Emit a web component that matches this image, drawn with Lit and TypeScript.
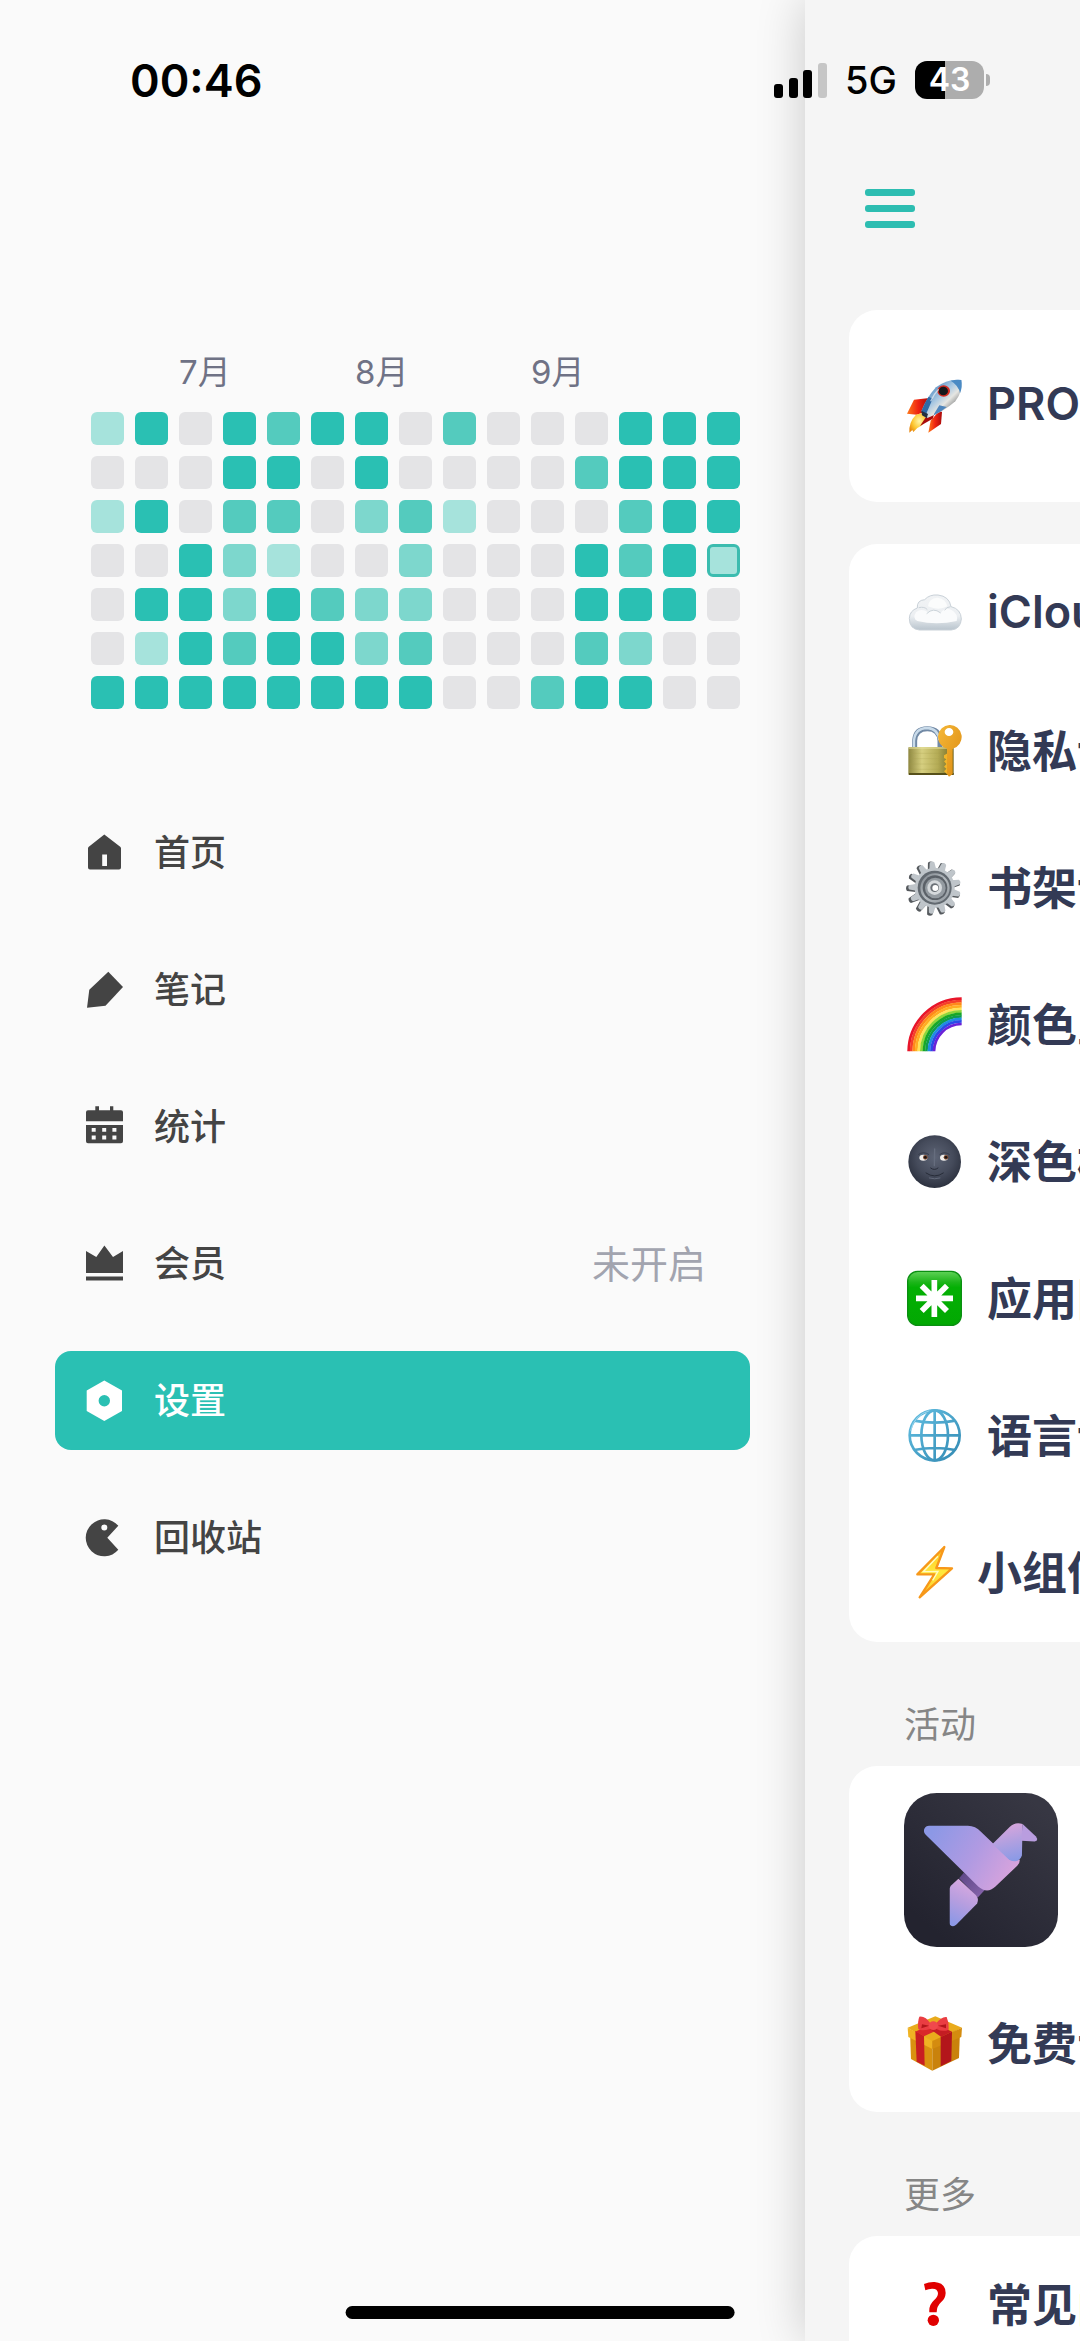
import { LitElement, html, css, svg, nothing } from "lit";
import { customElement } from "lit/decorators.js";
import { classMap } from "lit/directives/class-map.js";

/* ---------- drawer icons, 44 x 44 ---------- */

const homeIcon = svg`<path fill-rule="evenodd" d="M22.3 3.4 L38.2 15.8 Q39 16.5 39 17.5 V36.4 Q39 38.4 37 38.4 H8 Q6 38.4 6 36.4 V17.5 Q6 16.5 6.8 15.8 Z M20.2 23.4 V35.1 H25 V23.4 Z"/>`;
const penIcon = svg`<path d="M26.3 3.7 L41 19 L23.5 37.8 L5 39.7 L7.3 21.7 Z"/>`;
const calendarIcon = svg`<path fill-rule="evenodd" d="M13.3 1.3 H17 V5.3 H28 V1.3 H31.3 V5.3 H39 Q41 5.3 41 7.3 V16.3 H4 V7.3 Q4 5.3 6 5.3 H13.3 Z M4 20 H41 V36.3 Q41 38.3 39 38.3 H6 Q4 38.3 4 36.3 Z M9.7 23 V26.8 H13.7 V23 Z M20.2 23 V26.8 H24.2 V23 Z M30.4 23 V26.8 H34.4 V23 Z M9.7 30.6 V34.4 H13.7 V30.6 Z M20.2 30.6 V34.4 H24.2 V30.6 Z M30.4 30.6 V34.4 H34.4 V30.6 Z"/>`;
const crownIcon = svg`<path d="M4 8.9 L14.3 14.9 L22.4 3.6 L31 14.9 L41 8.9 V30.9 H4 Z M4 34.6 H41 V38.6 H4 Z"/>`;
const nutIcon = svg`<path fill-rule="evenodd" d="M22.3 1.5 L40 11.6 V32 L22.3 42 L4.7 32 V11.6 Z M22.3 16 A5.7 5.7 0 1 0 22.3 27.4 A5.7 5.7 0 1 0 22.3 16 Z"/>`;
const binIcon = svg`<path fill-rule="evenodd" d="M36.3 9.8 A18.5 18.5 0 1 0 36.3 33.8 L25.3 21.8 Z M22.3 8.4 A3 3 0 1 1 22.3 14.4 A3 3 0 1 1 22.3 8.4 Z"/>`;

/* ---------- settings icons, a 183-unit square shown at 61px ---------- */

const rocketIcon = svg`
  <svg viewBox="372 255 183 183">
    <defs>
      <linearGradient id="rk-body" x1="0" y1="0" x2="1" y2="1">
        <stop offset="0.15" stop-color="#3f7fba"/><stop offset="0.45" stop-color="#a9c8e2"/>
        <stop offset="0.6" stop-color="#e6e6e2"/><stop offset="0.85" stop-color="#55585c"/>
      </linearGradient>
      <linearGradient id="rk-fin" x1="0" y1="0" x2="1" y2="0">
        <stop offset="0" stop-color="#ff7a1a"/><stop offset="0.5" stop-color="#ef2312"/><stop offset="1" stop-color="#a80b0b"/>
      </linearGradient>
      <radialGradient id="rk-flame" cx="0.6" cy="0.4" r="0.7">
        <stop offset="0" stop-color="#fff6a8"/><stop offset="0.6" stop-color="#fcc62f"/><stop offset="1" stop-color="#e8860e"/>
      </radialGradient>
    </defs>
    <path fill="url(#rk-fin)" d="M381 371 L402 329 L448 324 L434 366 L410 374 Z"/>
    <path fill="url(#rk-fin)" d="M445 428 L452 392 L478 362 L486 366 L483 402 Z"/>
    <path fill="url(#rk-flame)" d="M388 428 Q386 396 408 374 L424 370 L438 384 Q436 404 412 414 L400 426 L397 420 Z"/>
    <path fill="#a80b0b" d="M420 408 L440 378 L470 352 L458 386 Z"/>
    <path fill="url(#rk-body)" d="M424 364 Q440 322 468 292 Q504 264 544 270 Q550 302 526 334 Q490 366 442 384 Z"/>
    <path fill="#2f6aa6" d="M424 364 Q434 338 446 320 L458 326 L440 368 L442 384 Z"/>
    <path fill="#4f86bd" d="M462 372 L478 346 L500 351 Q484 365 462 376 Z"/>
    <path fill="#4a8ac4" d="M512 272 Q530 268 544 270 Q548 290 540 310 Q536 286 512 272 Z"/>
    <path fill="#25303f" d="M424 362 L444 372 L440 384 L426 376 Z"/>
    <ellipse cx="491" cy="303" rx="19" ry="17" fill="#d22a20"/>
    <ellipse cx="490" cy="303" rx="14" ry="13" fill="#15181c"/>
    <path stroke="#e9eef2" stroke-width="4" fill="none" opacity="0.7" d="M452 334 Q462 312 476 298"/>
  </svg>`;

const cloudIcon = svg`
  <svg viewBox="372 874 183 183">
    <defs>
      <linearGradient id="cl" x1="0" y1="0" x2="0" y2="1">
        <stop offset="0" stop-color="#f1f3f5"/><stop offset="0.6" stop-color="#eceff2"/><stop offset="1" stop-color="#b9c4cd"/>
      </linearGradient>
    </defs>
    <path fill="url(#cl)" stroke="#c9d1d8" stroke-width="3" d="M418 1015 Q388 1012 388 980 Q389 957 412 949 Q410 926 434 924 Q448 908 474 910 Q508 914 513 945 Q543 952 544 982 Q542 1012 514 1015 Z"/>
    <path fill="#fafbfc" d="M412 988 Q396 980 408 962 Q424 948 444 962 Q462 948 482 964 Q498 944 516 956 Q536 968 530 988 Q470 1002 412 988 Z"/>
    <path fill="#fbfcfc" d="M444 944 Q446 920 472 918 Q498 922 502 944 Q476 958 444 944 Z"/>
    <path fill="none" stroke="#ccd4da" stroke-width="3" d="M440 966 Q460 946 482 964 M416 948 Q434 944 442 954 M512 945 Q498 946 494 956"/>
  </svg>`;

const lockIcon = svg`
  <svg viewBox="372 86 183 183">
    <defs>
      <linearGradient id="lk-body" x1="0" y1="0" x2="1" y2="0">
        <stop offset="0" stop-color="#8e8740"/><stop offset="0.3" stop-color="#d6cf80"/><stop offset="0.65" stop-color="#b4ab55"/><stop offset="1" stop-color="#6d6522"/>
      </linearGradient>
      <linearGradient id="lk-key" x1="0" y1="0" x2="1" y2="1">
        <stop offset="0" stop-color="#f5b838"/><stop offset="1" stop-color="#dc8a10"/>
      </linearGradient>
    </defs>
    <path fill="none" stroke="#7189a5" stroke-width="15" d="M404 170 V148 Q406 112 442 112 Q478 112 480 148 V170"/>
    <path fill="none" stroke="#c9dbea" stroke-width="7" d="M402 170 V148 Q405 111 442 110 Q474 112 478 146"/>
    <rect x="385" y="167" width="136" height="84" rx="3" fill="url(#lk-body)"/>
    <path stroke="#e9e4a4" stroke-width="3" d="M386 170 H520"/>
    <path stroke="#a59d4c" stroke-width="2" opacity="0.35" d="M388 186 H490 M388 202 H490 M388 218 H490 M388 234 H490"/>
    <rect x="387" y="245" width="134" height="6" fill="#57501a"/>
    <path fill="#5f5413" d="M510 180 h8 v66 l-8 6z"/>
    <path fill="#f0b429" d="M503 186 L492 192 L492 200 L499 204 L492 210 L499 218 L492 226 L499 232 L492 240 L503 250 Z"/>
    <path fill="url(#lk-key)" fill-rule="evenodd" d="M508 101 A35 36 0 0 1 518 172 V248 L507 256 L501 248 V172 A35 36 0 0 1 508 101 Z M507 110 A13 12 0 1 0 507 134 A13 12 0 1 0 507 110 Z"/>
  </svg>`;

const teeth = Array.from({ length: 13 }, (_, i) => (i * 360) / 13 - 6);
const gearIcon = svg`
  <svg viewBox="372 498 183 183">
    <defs>
      <linearGradient id="gr" x1="0" y1="0" x2="1" y2="1">
        <stop offset="0" stop-color="#7d848b"/><stop offset="0.5" stop-color="#b4babf"/><stop offset="1" stop-color="#90979d"/>
      </linearGradient>
    </defs>
    <g fill="#55595d">${teeth.map((a) => svg`<path transform="rotate(${a} 460 593)" d="M449 540 L452 514 Q460 508 468 514 L471 540 Z"/>`)}</g>
    <g fill="#bfc5ca">${teeth.map((a) => svg`<path transform="rotate(${a} 464 590)" d="M453 540 L457 514 Q464 508 471 514 L475 540 Z"/>`)}</g>
    <circle cx="464" cy="590" r="60" fill="#bfc5ca"/>
    <circle cx="464" cy="590" r="51" fill="#626970"/>
    <circle cx="465" cy="591" r="44" fill="url(#gr)"/>
    <circle cx="465" cy="590" r="37" fill="#5b6168"/>
    <circle cx="466" cy="591" r="31" fill="#949ba1"/>
    <circle cx="464" cy="590" r="22" fill="#d5d9dc"/>
    <circle cx="464" cy="590" r="13" fill="#6b7177"/>
    <circle cx="466" cy="591" r="9" fill="#ffffff"/>
  </svg>`;

const bands = ["#e8152a", "#f4402a", "#ff8a1a", "#ffae22", "#ffe45a", "#8fd63a", "#18a826", "#0f9c4c", "#1e8fe0", "#2a4ae8", "#6a22d8"];
const rainbowIcon = svg`
  <svg viewBox="372 910 183 183">
    ${bands.map((c, i) => {
      const r = 159 - i * 7.6;
      return svg`<path fill="none" stroke="${c}" stroke-width="8.2" d="M${545 - r} 1082 A${r} ${r} 0 0 1 545 ${1083 - r}"/>`;
    })}
  </svg>`;

const moonIcon = svg`
  <svg viewBox="372 152 183 183">
    <defs>
      <radialGradient id="mn" cx="0.5" cy="0.42" r="0.58">
        <stop offset="0" stop-color="#5d6475"/><stop offset="0.6" stop-color="#454b5b"/><stop offset="1" stop-color="#2c313f"/>
      </radialGradient>
    </defs>
    <circle cx="464" cy="244" r="79" fill="url(#mn)"/>
    <path fill="none" stroke="#363b4a" stroke-width="3" stroke-linecap="round" d="M416 222 Q430 212 446 222 M480 222 Q494 212 508 222"/>
    <ellipse cx="430" cy="232" rx="12" ry="9" fill="#f1efec"/>
    <ellipse cx="492" cy="232" rx="12" ry="9" fill="#f1efec"/>
    <circle cx="436" cy="231" r="7" fill="#7b4a31"/><circle cx="436" cy="231" r="4" fill="#1a1412"/>
    <circle cx="498" cy="231" r="7" fill="#7b4a31"/><circle cx="498" cy="231" r="4" fill="#1a1412"/>
    <path fill="none" stroke="#666d7e" stroke-width="4" stroke-linecap="round" d="M464 206 L463 256"/>
    <path fill="none" stroke="#272c38" stroke-width="3" stroke-linecap="round" d="M452 263 Q463 272 474 263 M438 278 Q464 296 490 278"/>
    <path fill="none" stroke="#636a7b" stroke-width="3" stroke-linecap="round" d="M448 293 Q464 298 480 293"/>
  </svg>`;

const asteriskIcon = svg`
  <svg viewBox="372 565 183 183">
    <defs>
      <linearGradient id="as" x1="0" y1="0" x2="0" y2="1">
        <stop offset="0" stop-color="#5fd257"/><stop offset="0.2" stop-color="#1db51a"/><stop offset="0.3" stop-color="#04b004"/><stop offset="1" stop-color="#02a802"/>
      </linearGradient>
    </defs>
    <rect x="383" y="575" width="161" height="162" rx="30" fill="url(#as)" stroke="#0b8f12" stroke-width="4"/>
    <path stroke="#ffffff" stroke-width="17" d="M463 601 V712 M408 656 H519 M425 618 L501 694 M501 618 L425 694"/>
  </svg>`;

const globeIcon = svg`
  <svg viewBox="372 977 183 183">
    <defs>
      <linearGradient id="gl" gradientUnits="userSpaceOnUse" x1="388" y1="992" x2="540" y2="1144">
        <stop offset="0" stop-color="#62bfe2"/><stop offset="1" stop-color="#3289b2"/>
      </linearGradient>
    </defs>
    <g fill="none" stroke="url(#gl)" stroke-width="8">
      <circle cx="464" cy="1068" r="75"/>
      <ellipse cx="464" cy="1068" rx="40" ry="75"/>
      <path d="M464 992 V1144 M388 1068 H540 M402 1024 Q464 1036 526 1024 M402 1112 Q464 1100 526 1112"/>
    </g>
    <path fill="none" stroke="#bfe6f4" stroke-width="2" d="M392 1054 Q402 1008 448 994"/>
  </svg>`;

const boltIcon = svg`
  <svg viewBox="372 189 183 183">
    <defs>
      <linearGradient id="bt" x1="0" y1="0" x2="0" y2="1">
        <stop offset="0" stop-color="#ffc11c"/><stop offset="0.5" stop-color="#ffe93e"/><stop offset="1" stop-color="#ffc928"/>
      </linearGradient>
    </defs>
    <path fill="url(#bt)" stroke="#f7981a" stroke-width="7" stroke-linejoin="round" d="M493 204 L412 286 L463 286 L419 355 L516 268 L469 267 Z"/>
    <path fill="none" stroke="#fffbc4" stroke-width="4" d="M474 232 L430 278 L474 277 L458 304"/>
  </svg>`;

const giftIcon = svg`
  <svg viewBox="372 818 183 183">
    <path fill="#d99210" d="M390 872 L457 900 V991 L393 956 Z"/>
    <path fill="#c9820c" d="M457 900 L540 872 L537 953 L457 991 Z"/>
    <path fill="#e9ab1c" d="M383 862 L466 828 L546 862 L457 908 Z"/>
    <path fill="#f0b323" d="M383 862 L457 902 V926 L385 890 Z"/>
    <path fill="#d48c0f" d="M457 902 L546 862 L544 890 L457 926 Z"/>
    <path fill="#c81e22" d="M406 872 L432 887 L434 976 L410 964 Z"/>
    <path fill="#b3161b" d="M516 874 L482 890 L482 978 L514 962 Z"/>
    <path fill="#d9272a" d="M406 874 L440 858 L466 872 L432 888 Z"/>
    <path fill="#c41d22" d="M450 866 L482 858 L516 874 L484 890 Z"/>
    <path fill="#ea3d42" d="M452 850 Q436 826 418 829 Q412 844 415 866 Q424 874 450 866 Z"/>
    <path fill="#ea3d42" d="M468 850 Q484 828 500 830 Q508 848 506 868 Q488 876 470 866 Z"/>
    <path fill="#b3161b" d="M426 852 L448 856 L424 864 Z M498 852 L474 856 L498 864 Z"/>
    <ellipse cx="460" cy="856" rx="14" ry="13" fill="#f0484c"/>
  </svg>`;

const questionIcon = svg`
  <svg viewBox="372 523 183 183">
    <path fill="#e00000" d="M432 553 Q448 546 464 547 Q497 550 497 580 Q496 598 483 608 Q470 620 470 638 H448 Q446 616 462 602 Q474 592 474 580 Q472 566 456 567 Q446 567 436 572 Z"/>
    <circle cx="460" cy="662" r="17" fill="#e00000"/>
  </svg>`;

const birdLogo = svg`
  <svg class="logo" viewBox="373 159 461 461" role="img" aria-label="app">
    <defs>
      <linearGradient id="bd-bg" x1="0.2" y1="0.9" x2="0.9" y2="0.1">
        <stop offset="0" stop-color="#23232f"/><stop offset="1" stop-color="#373743"/>
      </linearGradient>
      <linearGradient id="bd-wing" x1="0" y1="0.3" x2="1" y2="0.7">
        <stop offset="0" stop-color="#8c98e6"/><stop offset="0.5" stop-color="#b09ae2"/><stop offset="1" stop-color="#dca4dc"/>
      </linearGradient>
      <linearGradient id="bd-neck" x1="0.4" y1="0" x2="0.6" y2="1">
        <stop offset="0" stop-color="#dba6dc"/><stop offset="0.5" stop-color="#b2a0e0"/><stop offset="1" stop-color="#8a9ae6"/>
      </linearGradient>
      <linearGradient id="bd-tail" x1="0.6" y1="0" x2="0.3" y2="1">
        <stop offset="0" stop-color="#dcaae0"/><stop offset="0.5" stop-color="#b79edf"/><stop offset="1" stop-color="#8c98e6"/>
      </linearGradient>
      <linearGradient id="bd-fold" x1="0" y1="0" x2="1" y2="1">
        <stop offset="0" stop-color="#5b4684"/><stop offset="1" stop-color="#8a66ae"/>
      </linearGradient>
    </defs>
    <rect x="373" y="159" width="461" height="461" rx="98" fill="url(#bd-bg)"/>
    <path fill="url(#bd-fold)" d="M538 414 L552 398 L616 448 L594 472 Z"/>
    <path fill="url(#bd-tail)" d="M536 416 L588 464 Q598 474 592 490 L530 553 Q520 562 511 554 Q510 552 510 546 V446 Q510 440 514 436 Z"/>
    <path fill="url(#bd-wing)" d="M448 257 H562 Q586 256 604 276 L690 358 Q704 364 720 358 Q720 368 712 377 L646 440 Q622 462 596 440 L438 284 Q430 276 434 266 Q438 257 448 257 Z"/>
    <path fill="url(#bd-neck)" d="M638 312 L690 260 Q706 245 728 252 L726 346 Q720 362 706 363 Q694 364 686 357 Z"/>
    <path fill="#b99ddf" d="M728 252 L768 289 Q774 296 770 302 L764 304 L724 302 Z"/>
  </svg>`;

/* ---------- data ---------- */

const months = [
  { label: "7月", place: "m7" },
  { label: "8月", place: "m8" },
  { label: "9月", place: "m9" },
];

/* One string per weekday, one digit per week; "t" is today. */
const activity = [
  "140434403000444",
  "000440400003444",
  "140330231000344",
  "00421002000434t",
  "044243220004440",
  "014344230003200",
  "444444440034400",
];

const menu = [
  { icon: homeIcon, label: "首页" },
  { icon: penIcon, label: "笔记" },
  { icon: calendarIcon, label: "统计" },
  { icon: crownIcon, label: "会员", note: "未开启" },
  { icon: nutIcon, label: "设置", active: true },
  { icon: binIcon, label: "回收站" },
];

interface Setting {
  icon: unknown;
  label: string;
  tight?: boolean;
}

const general: Setting[] = [
  { icon: cloudIcon, label: "iCloud" },
  { icon: lockIcon, label: "隐私设置" },
  { icon: gearIcon, label: "书架设置" },
  { icon: rainbowIcon, label: "颜色主题" },
  { icon: moonIcon, label: "深色模式" },
  { icon: asteriskIcon, label: "应用图标" },
  { icon: globeIcon, label: "语言设置" },
  { icon: boltIcon, label: "小组件", tight: true },
];

/* ---------- drawer ---------- */

@customElement("side-drawer")
class SideDrawer extends LitElement {
  static styles = css`
    :host {
      display: block;
      padding: 348px 55px 0;
      background: #fafafa;
    }
    .months,
    .heat {
      display: grid;
      grid-template-columns: repeat(15, minmax(0, 1fr));
      gap: 11px;
      padding: 0 10px 0 36px;
    }
    .months { margin-bottom: 16px; }
    .heat { margin-bottom: 94px; }
    .month {
      grid-column-end: span 4;
      grid-row: 1;
      font-size: 33px;
      line-height: 48px;
      color: #6f7285;
    }
    .m7 { grid-column-start: 3; }
    .m8 { grid-column-start: 7; }
    .m9 { grid-column-start: 11; }
    .day {
      aspect-ratio: 1;
      box-sizing: border-box;
      border-radius: 6px;
      background: #e4e4e6;
    }
    .l1, .lt { background: #a6e3dc; }
    .l2 { background: #7dd7cd; }
    .l3 { background: #54cbbe; }
    .l4 { background: #2ac0b3; }
    .lt { border: 3px solid #3bbcaf; }
    .menu {
      display: flex;
      flex-direction: column;
      gap: 38px;
    }
    .item {
      display: flex;
      align-items: center;
      gap: 28px;
      height: 99px;
      box-sizing: border-box;
      padding: 0 44px 0 27px;
      border-radius: 16px;
      font-size: 36px;
      font-weight: 500;
      color: #444444;
      text-decoration: none;
    }
    .active {
      background: #2ac0b3;
      color: #ffffff;
    }
    .glyph {
      width: 44px;
      height: 44px;
      fill: currentColor;
    }
    .label,
    .note {
      padding-bottom: 5px;
    }
    .note {
      margin-left: auto;
      font-size: 38px;
      font-weight: 400;
      color: #a2a4af;
    }
  `;

  render() {
    return html`
      <div class="months">
        ${months.map((m) => html`<span class="month ${m.place}">${m.label}</span>`)}
      </div>
      <div class="heat">
        ${activity.flatMap((week) => [...week].map((level) => html`<i class="day l${level}"></i>`))}
      </div>
      <nav class="menu">
        ${menu.map(
          (m) => html`<a class=${classMap({ item: true, active: !!m.active })} href="#">
            <svg class="glyph" viewBox="0 0 44 44" aria-hidden="true">${m.icon}</svg>
            <span class="label">${m.label}</span>
            ${m.note ? html`<span class="note">${m.note}</span>` : nothing}
          </a>`
        )}
      </nav>
    `;
  }
}

/* ---------- settings page ---------- */

@customElement("settings-page")
class SettingsPage extends LitElement {
  static styles = css`
    :host {
      display: block;
      overflow: hidden;
      background: #f5f5f5;
    }
    .page {
      width: 100vw;
      box-sizing: border-box;
      padding: 180px 44px 0;
    }
    .toggle {
      display: flex;
      flex-direction: column;
      gap: 9px;
      width: 82px;
      padding: 9px 16px;
      margin-bottom: 73px;
      border: 0;
      background: none;
    }
    .bar {
      height: 7px;
      border-radius: 3px;
      background: #2dbdb1;
    }
    .card {
      border-radius: 28px;
      background: #ffffff;
      overflow: hidden;
    }
    .pro {
      padding: 27px 0 28px;
      margin-bottom: 42px;
    }
    .list { padding: 1px 0; }
    .row {
      display: flex;
      align-items: center;
      gap: 22px;
      width: 100%;
      height: 137px;
      padding: 0 55px;
      border: 0;
      background: none;
      font: inherit;
      font-size: 45px;
      font-weight: 600;
      color: #333a55;
      white-space: nowrap;
      text-align: left;
    }
    .tight { gap: 12px; }
    .emoji {
      display: flex;
      width: 61px;
      height: 61px;
    }
    .emoji svg { width: 100%; }
    .label { padding-bottom: 4px; }
    .title {
      margin: 0;
      padding: 56px 55px 14px;
      font-size: 36px;
      font-weight: 400;
      line-height: 54px;
      color: #868686;
    }
    .app {
      display: flex;
      padding: 27px 55px 28px;
    }
    .logo {
      width: 154px;
      height: 154px;
    }
  `;

  private row(s: Setting) {
    return html`<button class=${classMap({ row: true, tight: !!s.tight })}>
      <span class="emoji" aria-hidden="true">${s.icon}</span><span class="label">${s.label}</span>
    </button>`;
  }

  render() {
    return html`
      <div class="page">
        <button class="toggle" aria-label="菜单">
          <span class="bar"></span><span class="bar"></span><span class="bar"></span>
        </button>
        <section class="card pro">${this.row({ icon: rocketIcon, label: "PRO" })}</section>
        <section class="card list">${general.map((s) => this.row(s))}</section>
        <h2 class="title">活动</h2>
        <section class="card">
          <a class="app" href="#">${birdLogo}</a>
          ${this.row({ icon: giftIcon, label: "免费试用" })}
        </section>
        <h2 class="title">更多</h2>
        <section class="card">${this.row({ icon: questionIcon, label: "常见问题" })}</section>
      </div>
    `;
  }
}

/* ---------- status bar ---------- */

@customElement("status-bar")
class StatusBar extends LitElement {
  static styles = css`
    :host {
      display: flex;
      align-items: center;
      justify-content: space-between;
      height: 160px;
      padding: 0 90px 0 130px;
      color: #000000;
    }
    .time {
      font-size: 45px;
      font-weight: 600;
    }
    .right {
      display: flex;
      align-items: center;
      gap: 18px;
    }
    .signal {
      width: 53px;
      height: 35px;
    }
    .net {
      font-size: 38px;
      font-weight: 500;
    }
    .battery {
      display: flex;
      align-items: center;
      gap: 2px;
    }
    .level {
      width: 69px;
      border-radius: 12px;
      background: linear-gradient(90deg, #000000 43%, #adadad 43%);
      color: #ffffff;
      font-size: 32px;
      font-weight: 600;
      line-height: 38px;
      text-align: center;
    }
    .tip {
      width: 4px;
      height: 12px;
      border-radius: 0 4px 4px 0;
      background: #adadad;
    }
  `;

  render() {
    return html`
      <span class="time">00:46</span>
      <div class="right">
        <svg class="signal" viewBox="0 0 53 35" aria-hidden="true">
          <rect x="0" y="21" width="9" height="14" rx="3"/>
          <rect x="15" y="15" width="9" height="20" rx="3"/>
          <rect x="29" y="7" width="9" height="28" rx="3"/>
          <rect x="44" y="0" width="9" height="35" rx="3" fill="#c6c6c6"/>
        </svg>
        <span class="net">5G</span>
        <div class="battery"><span class="level">43</span><span class="tip"></span></div>
      </div>
    `;
  }
}

/* ---------- shell ---------- */

@customElement("app-root")
class AppRoot extends LitElement {
  static styles = css`
    :host {
      display: grid;
      grid-template-columns: minmax(0, 161fr) minmax(0, 55fr);
      grid-template-rows: minmax(0, 1fr);
      position: relative;
      height: 100vh;
      overflow: hidden;
      font-family: Inter, "Noto Sans CJK SC", sans-serif;
    }
    .sheet {
      position: relative;
      box-shadow: 0 0 46px rgba(0, 0, 0, 0.2);
    }
    .status {
      position: absolute;
      top: 0;
      left: 0;
      right: 0;
    }
    .home {
      position: absolute;
      bottom: 22px;
      left: 50%;
      width: 36%;
      height: 13px;
      translate: -50% 0;
      border-radius: 7px;
      background: #000000;
    }
  `;

  render() {
    return html`
      <side-drawer></side-drawer>
      <settings-page class="sheet"></settings-page>
      <status-bar class="status"></status-bar>
      <div class="home"></div>
    `;
  }
}
